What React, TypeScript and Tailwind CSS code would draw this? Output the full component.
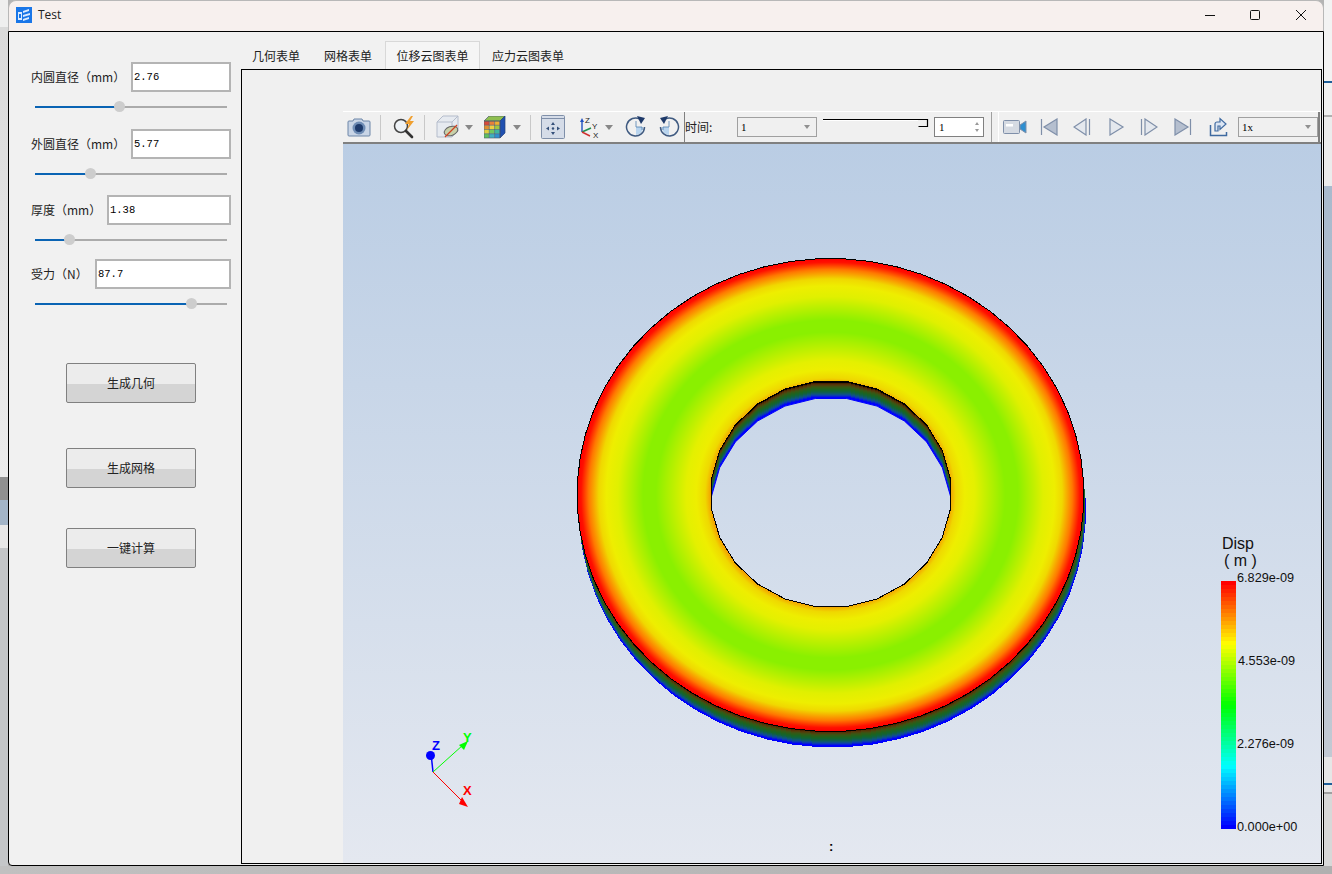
const sans = "font-['Noto_Sans_CJK_SC','Liberation_Sans',sans-serif]";

// outline of a faceted circle, used for the ring in the viewport
function poly(cx: number, cy: number, rx: number, ry: number, n: number, rot = 0.5) {
  const pts: string[] = [];
  for (let i = 0; i < n; i++) {
    const a = ((i + rot) * 2 * Math.PI) / n;
    pts.push(`${(cx + rx * Math.cos(a)).toFixed(1)},${(cy + ry * Math.sin(a)).toFixed(1)}`);
  }
  return pts.join(" ");
}

const wall = ["#000000", "#4a2400", "#553408", "#4f420c", "#405012", "#325a16", "#275f1a", "#1c6322", "#16642c", "#12623c", "#105e52", "#0f5a6c", "#0e4f8c", "#0c3cb0", "#0820d0", "#0000ff", "#0000ff"];

function jet(t: number) {
  // t = 0 top (red) .. 1 bottom (blue)
  const seg = t * 4;
  let r = 0, g = 0, b = 0;
  if (seg < 1) { r = 255; g = 255 * seg; }
  else if (seg < 2) { r = 255 * (2 - seg); g = 255; }
  else if (seg < 3) { g = 255; b = 255 * (seg - 2); }
  else { g = 255 * (4 - seg); b = 255; }
  return `rgb(${Math.round(r)},${Math.round(g)},${Math.round(b)})`;
}

const fields = [
  { label: "内圆直径（mm）", value: "2.76", fill: 84, mt: "mt-[30px]", input: "w-[100px]" },
  { label: "外圆直径（mm）", value: "5.77", fill: 55, mt: "mt-[15px]", input: "w-[100px]" },
  { label: "厚度（mm）", value: "1.38", fill: 34, mt: "mt-[14px]", input: "w-[124px]" },
  { label: "受力（N）", value: "87.7", fill: 156, mt: "mt-[12px]", input: "w-[136px]" },
];

function Field({ label, value, fill, mt, input }: { label: string; value: string; fill: number; mt: string; input: string }) {
  return (
    <div className={mt}>
      <div className="flex h-[30px] items-center pl-[22px] pr-[10px]">
        <span className={`${sans} text-[12px] whitespace-nowrap text-[#222]`}>{label}</span>
        <input
          readOnly
          value={value}
          className={`ml-auto h-[30px] ${input} border-2 border-[#b4b4b4] bg-white pl-[1px] font-['Liberation_Mono',monospace] text-[10.5px] text-black outline-none`}
        />
      </div>
      <div className="relative mt-[8px] ml-[26px] h-[14px] w-[192px]">
        <div className="absolute top-[6px] h-[2px] w-full bg-[#ababab]" />
        <div className="absolute top-[6px] h-[2px] bg-[#0a64b4]" style={{ width: fill }} />
        <div className="absolute top-[1px] h-[11px] w-[11px] rounded-full bg-[#cdcdcd]" style={{ left: fill - 5 }} />
      </div>
    </div>
  );
}

function ActionButton({ text, mt }: { text: string; mt: string }) {
  return (
    <button className={`${mt} ml-[57px] flex h-[40px] w-[130px] items-center justify-center rounded-[2px] border border-[#808080] bg-[linear-gradient(#ececec_52%,#d4d4d4_52%)] ${sans} text-[12px] text-[#222]`}>
      {text}
    </button>
  );
}

function Arrow({ ml }: { ml: string }) {
  return (
    <svg width="8" height="5" viewBox="0 0 8 5" className={ml}>
      <path d="M0 0h8L4 5z" fill="#888" />
    </svg>
  );
}

function Sep({ ml }: { ml: string }) {
  return <div className={`${ml} h-[25px] w-px bg-[#c8c8c8]`} />;
}

function Combo({ text, w, ml }: { text: string; w: string; ml: string }) {
  return (
    <div className={`${w} ${ml} flex h-[20px] items-center justify-between border border-[#a0a0a0] bg-[#f0f0f0] pl-[3px] pr-[6px] font-['Liberation_Serif',serif] text-[11px] text-black`}>
      <span>{text}</span>
      <svg width="6" height="4" viewBox="0 0 6 4"><path d="M0 0h6L3 4z" fill="#909090" /></svg>
    </div>
  );
}

function CameraIcon() {
  return (
    <svg width="24" height="20" viewBox="0 0 24 20" className="ml-[4px]">
      <path d="M2 4h4l1-2h8l1 2h6a1 1 0 0 1 1 1v13a1 1 0 0 1-1 1H2a1 1 0 0 1-1-1V5a1 1 0 0 1 1-1z" fill="#c9d5e6" stroke="#6d86a8" />
      <circle cx="12" cy="11" r="6.5" fill="#6f8db5" />
      <circle cx="12" cy="11" r="4" fill="#1d3a6b" />
    </svg>
  );
}

function SearchIcon() {
  return (
    <svg width="24" height="24" viewBox="0 0 24 24" className="ml-[11px]">
      <circle cx="9" cy="11" r="6.5" fill="#eef2f6" stroke="#444" strokeWidth="1.5" />
      <path d="M14 16l6 6" stroke="#333" strokeWidth="2.6" strokeLinecap="round" />
      <path d="M19 1l-6 8h4l-2 6 7-9h-4l3-5z" fill="#f0a030" />
    </svg>
  );
}

function BoxIcon() {
  return (
    <svg width="24" height="24" viewBox="0 0 24 24" className="ml-[11px]">
      <path d="M1 7l6-6h15v15l-6 6H1z" fill="#e6eaf0" stroke="#b4bccb" />
      <path d="M1 7h15v15M16 7l6-6" fill="none" stroke="#b4bccb" />
      <ellipse cx="15" cy="16" rx="7" ry="4.5" fill="#c8d0a8" stroke="#666" transform="rotate(-20 15 16)" />
      <path d="M9 22l12-12" stroke="#d04020" strokeWidth="1.2" />
    </svg>
  );
}

const cubeCells = [
  ["#d84a3a", "#e8803a", "#f0b030"],
  ["#e09030", "#f0d040", "#a0c840"],
  ["#e0d040", "#70c860", "#40b8a0"],
  ["#60c060", "#40b0c0", "#3090d0"],
];

function CubeIcon() {
  return (
    <svg width="22" height="23" viewBox="0 0 22 23" className="ml-[11px]">
      {cubeCells.map((row, y) =>
        row.map((c, x) => <rect key={`${x}-${y}`} x={x * 5.3} y={5 + y * 4.25} width="5.3" height="4.25" fill={c} />)
      )}
      <path d="M0 5l5-5h16l-5 5z" fill="#8fbf50" stroke="#4a5a70" strokeWidth=".7" />
      <path d="M16 5l5-5v17l-5 5z" fill="#2050b0" stroke="#23407a" strokeWidth=".7" />
      <path d="M0 5h16v17H0zM5.300 5v17M10.600 5v17M0 9.250h16M0 13.500h16M0 17.750h16" fill="none" stroke="#4a5a70" strokeWidth=".6" />
    </svg>
  );
}

function FitIcon() {
  return (
    <svg width="24" height="24" viewBox="0 0 24 24" className="ml-[10px]">
      <rect x=".5" y=".5" width="23" height="23" rx="1" fill="#d5dce8" stroke="#7f8fa9" />
      <path d="M1 3.500h22" stroke="#7f8fa9" />
      <path d="M12 7l-2 3h4zM12 20l-2-3h4zM5 13.500l3-2v4zM19 13.500l-3-2v4z" fill="#35507a" />
      <circle cx="12" cy="13.500" r="1.200" fill="#35507a" />
    </svg>
  );
}

function AxesIcon() {
  return (
    <svg width="22" height="24" viewBox="0 0 22 24" className="ml-[14px]">
      <path d="M3 17V6" stroke="#2050c0" strokeWidth="1.400" />
      <path d="M3 17l9-4" stroke="#209050" strokeWidth="1.500" />
      <path d="M3 17l8 4" stroke="#d03030" strokeWidth="1.500" />
      <path d="M3 3L1 7h4z" fill="#2050c0" />
      <text x="6" y="8" fontSize="8" fontFamily="Liberation Sans" fill="#222">Z</text>
      <text x="13" y="14" fontSize="8" fontFamily="Liberation Sans" fill="#222">Y</text>
      <text x="14" y="23" fontSize="8" fontFamily="Liberation Sans" fill="#222">X</text>
    </svg>
  );
}

function RotateIcon({ flip, ml }: { flip?: boolean; ml: string }) {
  return (
    <svg width="21" height="22" viewBox="0 0 21 22" className={`${ml} ${flip ? "-scale-x-100" : ""}`}>
      <path d="M11 11h7a7.500 7.500 0 0 1-7 8z" fill="#b8d4ee" />
      <path d="M11 5v6h6v3" fill="none" stroke="#5080b0" strokeWidth=".8" />
      <path d="M15 3.200A9 9 0 1 0 19.500 11" fill="none" stroke="#3f5a80" strokeWidth="1.500" />
      <path d="M12 0l8 2-4 6z" fill="#1f3a6a" />
    </svg>
  );
}

// transport icons share one colour set
const tStroke = "#7f8fa9";
const tFill = "#e4e8ee";

function PlayerIcon({ d, ml, fill = tFill }: { d: string; ml: string; fill?: string }) {
  return (
    <svg width="18" height="18" viewBox="0 0 18 18" className={ml}>
      <path d={d} fill={fill} stroke={tStroke} strokeWidth="1.200" />
    </svg>
  );
}

function Toolbar() {
  return (
    <div className="flex h-[33px] shrink-0 items-center border-t border-b-2 border-t-white border-b-[#808080] bg-[#f0f0f0]">
      <CameraIcon />
      <Sep ml="ml-[9px]" />
      <SearchIcon />
      <Sep ml="ml-[8px]" />
      <BoxIcon />
      <Arrow ml="ml-[5px]" />
      <CubeIcon />
      <Arrow ml="ml-[7px]" />
      <Sep ml="ml-[9px]" />
      <FitIcon />
      <AxesIcon />
      <Arrow ml="ml-[4px]" />
      <RotateIcon ml="ml-[12px]" />
      <RotateIcon flip ml="ml-[13px]" />
      <div className="ml-[4px] h-full w-px bg-[#808080]" />
      <span className={`w-[52px] ${sans} text-[12px] text-[#222]`}>时间:</span>
      <Combo text="1" w="w-[80px]" ml="" />
      <svg width="107" height="12" viewBox="0 0 107 12" className="ml-[6px] -mt-[6px]">
        <path d="M0 1.500h105" stroke="#000" strokeWidth="1" />
        <path d="M0 2.500h95" stroke="#fff" />
        <path d="M95.500 8.500h9V1" fill="none" stroke="#000" strokeWidth="1.200" />
      </svg>
      <div className="ml-[4px] flex h-[20px] w-[50px] items-center justify-between border border-[#808080] bg-white pl-[4px] pr-[3px] font-['Liberation_Serif',serif] text-[11px] text-black">
        <span>1</span>
        <svg width="6" height="12" viewBox="0 0 6 12"><path d="M3 1l2 3H1zM3 11L1 8h4z" fill="#999" /></svg>
      </div>
      <div className="ml-[7px] h-full w-px bg-[#a0a0a0]" />
      <div className="ml-[6px] flex h-full w-[322px] items-center border-l border-r-2 border-l-white border-r-[#808080]">
        <svg width="24" height="16" viewBox="0 0 24 16" className="ml-[4px]">
          <rect x=".5" y="1.500" width="16" height="13" rx="1" fill="#d5dae2" stroke={tStroke} />
          <rect x="3" y="5" width="7" height="2.500" fill="#fff" />
          <path d="M17 6l6-4v12l-6-4z" fill="#2f8fd0" stroke={tStroke} />
        </svg>
        <PlayerIcon ml="ml-[13px]" fill="#b5bfcf" d="M1.500 1v16M17 1L4 9l13 8z" />
        <PlayerIcon ml="ml-[15px]" d="M13 1L1 9l12 8zM16.500 1v16" />
        <PlayerIcon ml="ml-[16px]" d="M3 1l13 8-13 8z" />
        <PlayerIcon ml="ml-[15px]" d="M1.500 1v16M5 1l12 8-12 8z" />
        <PlayerIcon ml="ml-[16px]" fill="#b5bfcf" d="M1 1l13 8-13 8zM16.500 1v16" />
        <svg width="20" height="20" viewBox="0 0 20 20" className="ml-[17px]">
          <path d="M1.500 8v10.500h16V15" fill="none" stroke="#3f6aa0" strokeWidth="1.500" />
          <path d="M6 14V7c0-1 1-2 2-2h3V1.500L17 7l-6 5.500V9H9v5z" fill="#dbe5f3" stroke="#3f6aa0" strokeWidth="1.200" />
        </svg>
        <Combo text="1x" w="w-[80px]" ml="ml-[9px]" />
      </div>
    </div>
  );
}

function Ring() {
  const cx = 830.5;
  const depth = [16, 15, 14, 13, 12, 11, 10, 9, 8, 7, 6, 5, 4, 3, 2, 1, 0];
  const bands = Array.from({ length: 62 }, (_, i) => i);
  const outer = poly(cx, 495, 253.5, 236.5, 60);
  const inner = poly(831, 494, 120.5, 113.5, 24);
  return (
    <svg viewBox="343 144 978 719" className="block h-full w-full">
      <defs>
        <linearGradient id="sky" gradientUnits="userSpaceOnUse" x1="0" y1="144" x2="0" y2="863">
          <stop offset="0" stopColor="#bacde4" />
          <stop offset="1" stopColor="#e4e8f0" />
        </linearGradient>
        <radialGradient id="disp" cx="0.5" cy="0.5" r="0.5">
          <stop offset="0.47" stopColor="#f59a00" />
          <stop offset="0.495" stopColor="#efd800" />
          <stop offset="0.53" stopColor="#eeee00" />
          <stop offset="0.57" stopColor="#e4f000" />
          <stop offset="0.69" stopColor="#8af000" />
          <stop offset="0.74" stopColor="#8af000" />
          <stop offset="0.84" stopColor="#e0f000" />
          <stop offset="0.885" stopColor="#eeee00" />
          <stop offset="0.915" stopColor="#f0d800" />
          <stop offset="0.955" stopColor="#ff7800" />
          <stop offset="0.985" stopColor="#ff1000" />
          <stop offset="1" stopColor="#ff0000" />
        </radialGradient>
        <clipPath id="hole">
          <polygon points={inner} />
        </clipPath>
      </defs>
      <rect x="343" y="144" width="978" height="719" fill="url(#sky)" />

      {depth.map((i) => (
        <polygon key={i} points={poly(cx + i * 0.12, 495 + i, 253.5, 236.5, 60)} fill={wall[i]} shapeRendering="crispEdges" />
      ))}
      <g clipPath="url(#hole)">
        {depth.slice().reverse().map((i) => (
          <polygon key={i} points={poly(831, 494 + i, 120.5, 113.5, 24)} fill={wall[i]} shapeRendering="crispEdges" />
        ))}
        <polygon points={poly(831, 511, 120.5, 113.5, 24)} fill="url(#sky)" stroke="#0000ff" strokeWidth="1" />
      </g>
      <path
        d={`M${outer.split(" ").join("L")}Z M${inner.split(" ").join("L")}Z`}
        fill="url(#disp)"
        fillRule="evenodd"
        stroke="#000"
        strokeWidth="1"
        shapeRendering="crispEdges"
      />

      {/* colour legend */}
      {bands.map((i) => (
        <rect key={i} x="1221" y={581 + i * 4} width="15" height="4" fill={jet(i / 61)} />
      ))}
      <g fontFamily="Liberation Sans" fill="#111">
        <text x="1222" y="549" fontSize="16">Disp</text>
        <text x="1224" y="566" fontSize="16" xmlSpace="preserve">( m )</text>
        <text x="1237" y="582" fontSize="12.7">6.829e-09</text>
        <text x="1238" y="665" fontSize="12.7">4.553e-09</text>
        <text x="1237" y="748" fontSize="12.7">2.276e-09</text>
        <text x="1237" y="831" fontSize="12.7">0.000e+00</text>
        <text x="829" y="851" fontSize="13" fontWeight="700" fill="#000">:</text>
      </g>

      {/* axes triad */}
      <path d="M433 772l-1.500-14" stroke="#0000ff" strokeWidth="1.500" fill="none" />
      <circle cx="430.500" cy="755.500" r="4.500" fill="#0000ff" />
      <path d="M433 772l30-27" stroke="#00ff00" fill="none" />
      <path d="M468 741l-9 4 5 5z" fill="#00ff00" />
      <path d="M433 772l33 33" stroke="#ff0000" fill="none" />
      <path d="M468 807l-9-3 3-7z" fill="#ff0000" />
      <g fontFamily="Liberation Sans" fontSize="13" fontWeight="700">
        <text x="432" y="750" fill="#0000ff">Z</text>
        <text x="463" y="742" fill="#00ff00">Y</text>
        <text x="463" y="795" fill="#ff0000">X</text>
      </g>
    </svg>
  );
}

function Tabs() {
  const cls = `${sans} flex items-center justify-center text-[12px] text-[#222]`;
  return (
    <div className="-ml-px flex h-[37px] items-end">
      <div className={`${cls} h-[27px] w-[72px]`}>几何表单</div>
      <div className={`${cls} h-[27px] w-[72px]`}>网格表单</div>
      <div className={`${cls} ml-px h-[28px] w-[95px] border border-b-0 border-[#d8d8d8] bg-[#f5f5f5]`}>位移云图表单</div>
      <div className={`${cls} h-[27px] w-[96px]`}>应力云图表单</div>
    </div>
  );
}

export default function App() {
  return (
    <div className="flex h-[874px] w-[1332px] flex-col overflow-hidden bg-[#b4b4b4]">
      <div className="flex h-[866px] shrink-0">
        {/* desktop behind the window */}
        <div className="flex w-[8px] shrink-0 flex-col">
          <div className="h-[27px] bg-[#efefef]" />
          <div className="h-[450px] bg-[linear-gradient(#dadada,#ececec)]" />
          <div className="h-[23px] bg-[#909090]" />
          <div className="h-[25px] bg-[#a3b5c8]" />
          <div className="h-[23px] bg-[#e8e8e8]" />
          <div className="flex-1 bg-[#c4c6c8]" />
        </div>

        <div className="flex w-[1316px] shrink-0 flex-col">
          <div className="flex h-[31px] shrink-0 items-center rounded-t-[8px] border-x border-t border-[#b8b8b8] bg-[#f7f0ee] pb-[2px] pl-[7px]">
            <svg width="16" height="16" viewBox="0 0 16 16">
              <rect width="16" height="16" fill="#1a76e8" />
              <path d="M2 5h4v8H2zM7 4l6-2v2l-6 2zM7 8l7-2v2l-7 2zM7 12l6-2v2l-6 2z" fill="#dcebff" />
              <path d="M3 7h2v4H3z" fill="#1a76e8" />
            </svg>
            <span className="ml-[6px] font-['Open_Sans',sans-serif] text-[12px] text-[#222]">Test</span>
            <svg width="10" height="10" viewBox="0 0 10 10" className="ml-auto">
              <path d="M0 5.500h10" stroke="#111" />
            </svg>
            <svg width="10" height="10" viewBox="0 0 10 10" className="ml-[35px]">
              <rect x=".5" y=".5" width="9" height="9" rx="1" fill="none" stroke="#111" />
            </svg>
            <svg width="10" height="10" viewBox="0 0 10 10" className="ml-[36px] mr-[17px]">
              <path d="M0 0l10 10M10 0L0 10" stroke="#111" />
            </svg>
          </div>

          <div className="flex flex-1 rounded-bl-[4px] border border-black bg-[#f1f1f1]">
            <div className="flex w-[232px] shrink-0 flex-col">
              {fields.map((f) => (
                <Field key={f.label} {...f} />
              ))}
              <ActionButton text="生成几何" mt="mt-[52px]" />
              <ActionButton text="生成网格" mt="mt-[45px]" />
              <ActionButton text="一键计算" mt="mt-[40px]" />
            </div>
            <div className="flex min-w-0 flex-1 flex-col pb-[1px] pr-[1px]">
              <Tabs />
              <div className="flex min-h-0 flex-1 flex-col border border-black bg-[#f0f0f0] pl-[101px] pt-[41px]">
                <Toolbar />
                <div className="min-h-0 flex-1">
                  <Ring />
                </div>
              </div>
            </div>
          </div>
        </div>

        <div className="flex flex-1 flex-col">
          <div className="h-[81px] bg-[#f3f3f3]" />
          <div className="h-[2px] bg-[#1f5f99]" />
          <div className="h-[32px] bg-[#f0f0f0]" />
          <div className="h-[2px] bg-[#b0b0b0]" />
          <div className="h-[69px] bg-[#ececec]" />
          <div className="h-[571px] bg-[linear-gradient(#a9bacd,#c2c9d3)]" />
          <div className="h-[26px] bg-[#e6e6e6]" />
          <div className="h-[2px] bg-[#1f5f99]" />
          <div className="h-[7px] bg-[#e6e6e6]" />
          <div className="h-[2px] bg-[#a0a0a0]" />
          <div className="flex-1 bg-[#d8d8d8]" />
        </div>
      </div>
      <div className="flex-1 bg-[linear-gradient(90deg,#c0c0c0,#b0b0b0)]" />
    </div>
  );
}
